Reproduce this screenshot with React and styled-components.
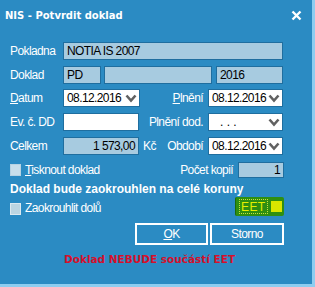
import React from "react";
import styled, { createGlobalStyle } from "styled-components";

const GlobalStyle = createGlobalStyle`
  body {
    margin: 0;
    background: #2b8bc3;
  }
`;

const Chevron = () => (
  <svg width="12" height="9" viewBox="0 0 12 9">
    <polyline
      points="1.5,1.5 6,6.5 10.5,1.5"
      fill="none"
      stroke="#616161"
      strokeWidth="2.6"
    />
  </svg>
);

const Dialog = () => {
  return (
    <Window>
      <TitleBar>
        <span>NIS - Potvrdit doklad</span>
        <svg width="11" height="11" viewBox="0 0 11 11">
          <path d="M1.5 1.5 L9.5 9.5 M9.5 1.5 L1.5 9.5" stroke="#fff" strokeWidth="2.4" />
        </svg>
      </TitleBar>

      <Form>
        <Row $mt={0}>
          <Label>Pokladna</Label>
          <Field $w={220}>NOTIA IS 2007</Field>
        </Row>

        <Row $mt={6}>
          <Label>Doklad</Label>
          <Field $w={38}>PD</Field>
          <Field $w={108} $ml={3} />
          <Field $w={67} $ml={4}>2016</Field>
        </Row>

        <Row $mt={5}>
          <Label>
            <u>D</u>atum
          </Label>
          <Select $w={77}>
            08.12.2016
            <Chevron />
          </Select>
          <Right>
            <Label $right>
              <u>P</u>lnění
            </Label>
            <Select $w={75}>
              08.12.2016
              <Chevron />
            </Select>
          </Right>
        </Row>

        <Row $mt={6}>
          <Label>Ev. č. DD</Label>
          <Field $w={76} $white />
          <Right>
            <Label $right>Plnění dod.</Label>
            <Select $w={75}>
              <Dots>. . .</Dots>
              <Chevron />
            </Select>
          </Right>
        </Row>

        <Row $mt={6}>
          <Label>Celkem</Label>
          <Field $w={76} $num>1 573,00</Field>
          <Unit>Kč</Unit>
          <Right>
            <Label $right>Období</Label>
            <Select $w={75}>
              08.12.2016
              <Chevron />
            </Select>
          </Right>
        </Row>

        <Row $mt={7} $h={16} $wide>
          <Check />
          <CheckText>
            <u>T</u>isknout doklad
          </CheckText>
          <Right>
            <Label $right>Počet kopií</Label>
            <Field $w={46} $h={16} $num>1</Field>
          </Right>
        </Row>

        <Notice>Doklad bude zaokrouhlen na celé koruny</Notice>

        <Row $mt={1} $h={19} $wide $top>
          <Check $dim $offset={6} />
          <CheckText $offset={4}>Zaokrouhlit dolů</CheckText>
          <Right>
            <Eet>
              <EetText>EET</EetText>
              <EetLamp />
            </Eet>
          </Right>
        </Row>

        <Row $mt={7} $h={22} $wide>
          <Right>
            <Button $w={73}>
              <u>O</u>K
            </Button>
            <Button $w={74} $ml={2}>Storno</Button>
          </Right>
        </Row>

        <Warning>Doklad NEBUDE součástí EET</Warning>
      </Form>
    </Window>
  );
};

export default function App() {
  return (
    <>
      <GlobalStyle />
      <Dialog />
    </>
  );
}

const Window = styled.div`
  width: 315px;
  height: 287px;
  box-sizing: border-box;
  background: #2b8bc3;
  border-right: 3px solid #8dcdf0;
  border-bottom: 3px solid #8dcdf0;
  font-family: "Liberation Sans", Arial, sans-serif;
  font-size: 12px;
  letter-spacing: -0.6px;
  color: #fff;
  overflow: hidden;
`;

const TitleBar = styled.div`
  height: 30px;
  display: flex;
  align-items: center;
  justify-content: space-between;
  padding: 0 10px 0 5px;
  font-family: "DejaVu Sans", sans-serif;
  font-weight: bold;
  font-size: 10px;
  letter-spacing: 0;
`;

const Form = styled.div`
  padding: 12px 0 0 10px;
`;

const Row = styled.div`
  display: flex;
  align-items: ${(p) => (p.$top ? "flex-start" : "center")};
  width: ${(p) => (p.$wide ? 274 : 273)}px;
  height: ${(p) => p.$h || 18}px;
  margin-top: ${(p) => p.$mt}px;
`;

const Right = styled.div`
  margin-left: auto;
  display: flex;
  align-items: center;
  height: 100%;
`;

const Label = styled.span`
  width: ${(p) => (p.$right ? "auto" : "53px")};
  margin-right: ${(p) => (p.$right ? 5 : 0)}px;
  white-space: nowrap;
`;

const Field = styled.div`
  box-sizing: border-box;
  width: ${(p) => p.$w}px;
  height: ${(p) => p.$h || 18}px;
  margin-left: ${(p) => p.$ml || 0}px;
  padding: 0 3px;
  display: flex;
  align-items: center;
  justify-content: ${(p) => (p.$num ? "flex-end" : "flex-start")};
  background: ${(p) => (p.$white ? "#fff" : "#a7cbe0")};
  border: 1px solid #1f6e9f;
  color: #000;
  white-space: nowrap;
`;

const Select = styled.div`
  box-sizing: border-box;
  width: ${(p) => p.$w}px;
  height: 18px;
  padding: 0 2px 0 3px;
  display: flex;
  align-items: center;
  justify-content: space-between;
  background: #fff;
  border: 1px solid #1f6e9f;
  color: #000;
  white-space: nowrap;
`;

const Dots = styled.span`
  padding-left: 8px;
  letter-spacing: 0;
`;

const Unit = styled.span`
  margin-left: 4px;
`;

const Check = styled.span`
  box-sizing: border-box;
  width: 11px;
  height: 12px;
  margin-top: ${(p) => p.$offset || 0}px;
  background: ${(p) => (p.$dim ? "#bcd5e2" : "#c9dfeb")};
  border: 1px solid ${(p) => (p.$dim ? "#dce9f0" : "#b7d3e3")};
`;

const CheckText = styled.span`
  margin-left: 4px;
  margin-top: ${(p) => p.$offset || 0}px;
  white-space: nowrap;
`;

const Notice = styled.div`
  margin-top: 4px;
  height: 14px;
  line-height: 14px;
  font-weight: bold;
  letter-spacing: 0;
  white-space: nowrap;
`;

const Eet = styled.div`
  box-sizing: border-box;
  width: 49px;
  height: 19px;
  display: flex;
  align-items: center;
  padding: 0 2px 0 3px;
  background: #2f8f10;
  border-left: 1px solid #1c6b06;
  border-radius: 2px;
`;

const EetText = styled.span`
  box-sizing: border-box;
  height: 15px;
  padding: 0 1px;
  line-height: 14px;
  color: #e6f000;
  border: 1px dotted #c8e040;
  letter-spacing: 0.4px;
`;

const EetLamp = styled.span`
  width: 11px;
  height: 11px;
  margin-left: auto;
  background: #d9e600;
`;

const Button = styled.button`
  box-sizing: border-box;
  width: ${(p) => p.$w}px;
  height: 22px;
  margin-left: ${(p) => p.$ml || 0}px;
  background: transparent;
  border: 2px solid #fff;
  color: #fff;
  font-family: inherit;
  font-size: 12px;
  letter-spacing: -0.6px;
  padding: 0;
`;

const Warning = styled.div`
  margin-top: 7px;
  padding-left: 54px;
  height: 14px;
  line-height: 14px;
  font-family: "DejaVu Sans", sans-serif;
  font-weight: bold;
  font-size: 10.5px;
  letter-spacing: 0;
  color: #d5102b;
  white-space: nowrap;
`;
